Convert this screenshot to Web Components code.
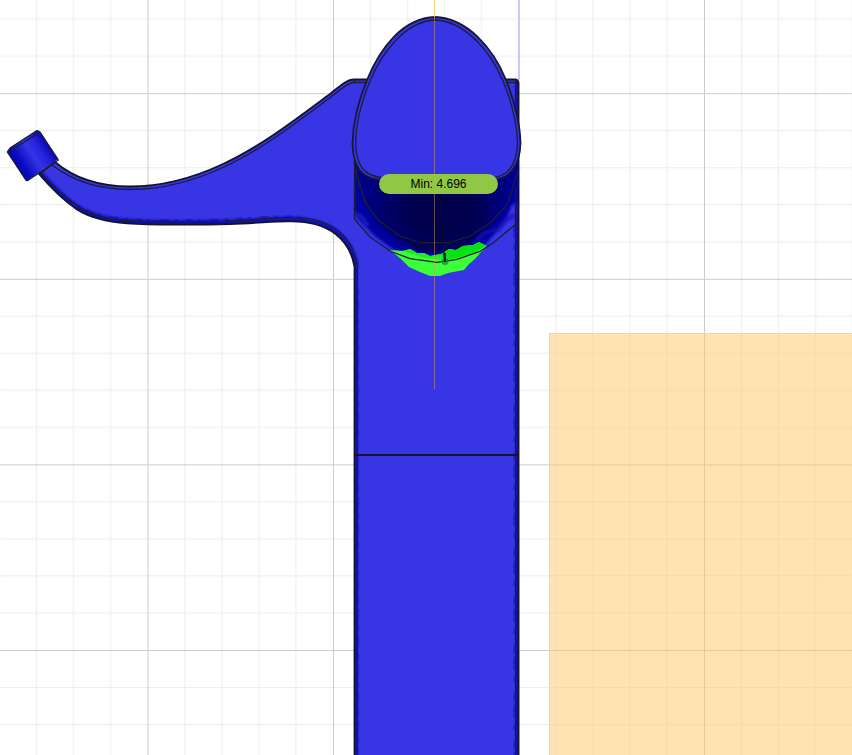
<!DOCTYPE html>
<html lang="en">
<head>
<meta charset="utf-8">
<title>Thickness view</title>
<style>
html, body { height: 100%; margin: 0; }
body { background: #fff; font-family: "Liberation Sans", Arial, sans-serif; overflow: hidden; }
</style>
</head>
<body>
<model-viewport>
  <view-grid></view-grid>
  <part-model></part-model>
  <measure-label>Min: 4.696</measure-label>
</model-viewport>
<script>
function define(name, html) {
  const t = document.createElement('template');
  t.innerHTML = html;
  customElements.define(name, class extends HTMLElement {
    constructor() {
      super();
      this.attachShadow({ mode: 'open' }).append(t.content.cloneNode(true));
    }
  });
}

define('model-viewport', `
<style>
:host { display: grid; position: relative; height: 100%; overflow: hidden; background: #fff; }
::slotted(view-grid), ::slotted(part-model) { grid-area: 1 / 1; }
::slotted(measure-label) { position: absolute; left: 379px; top: 174px; }
</style><slot></slot>`);

define('measure-label', `
<style>
:host { display: flex; align-items: center; justify-content: center; box-sizing: border-box; width: 119px; height: 20px; border-radius: 10px; background: #90c846; color: #000; font-size: 12px; line-height: 20px; white-space: nowrap; }
</style><span><slot></slot></span>`);

define('view-grid', `
<style>
:host { display: block; min-width: 0; min-height: 0; }
svg { display: block; width: 100%; height: 100%; }
</style>
<svg aria-hidden="true">
  <defs>
    <pattern id="cells" x="147.500" y="93.200" width="185.5" height="185.6" patternUnits="userSpaceOnUse">
      <g fill="none" stroke="#000" stroke-opacity=".07">
        <path d="M37.5 0V186M74.5 0V186M111.5 0V186M148.5 0V186M0 37.500H186M0 74.500H186M0 111.500H186M0 148.800H186"/>
        <path d="M.5 0V186M0 .5H186" stroke-opacity=".2"/>
      </g>
    </pattern>
  </defs>
  <rect width="100%" height="100%" fill="url(#cells)"/>
  <rect x="549" y="333" width="100%" height="100%" fill="#ffc766" fill-opacity=".5"/>
  <path d="M549.5 5000V333.500H5000" fill="none" stroke="#f9d492"/>
  <path d="M519 0V80" stroke="#c9c7ff" stroke-width="2"/>
</svg>`);

define('part-model', `
<style>
:host { display: block; min-width: 0; min-height: 0; }
svg { display: block; width: 100%; height: 100%; overflow: hidden; }
.edge { fill: none; stroke: #1c1c38; stroke-width: 1.3; stroke-linejoin: round; }
.rim { stroke: #14142c; stroke-width: 1.8; }
</style>
<svg role="img" aria-label="Part thickness analysis">
  <defs>
    <filter id="soft" x="-20%" y="-20%" width="140%" height="140%"><feGaussianBlur stdDeviation="1.500"/></filter>
    <filter id="wide" x="-30%" y="-30%" width="160%" height="160%"><feGaussianBlur stdDeviation="8"/></filter>
    <linearGradient id="cap" x1="14" y1="166" x2="50" y2="142" gradientUnits="userSpaceOnUse">
      <stop offset="0" stop-color="#0000ac"/><stop offset=".2" stop-color="#0b0bc3"/><stop offset=".5" stop-color="#3534e4"/><stop offset=".72" stop-color="#2422dc"/><stop offset="1" stop-color="#0000a0"/>
    </linearGradient>
    <linearGradient id="well" x1="355" y1="0" x2="518" y2="0" gradientUnits="userSpaceOnUse">
      <stop offset="0" stop-color="#000090"/><stop offset=".2" stop-color="#000069"/><stop offset=".5" stop-color="#000050"/><stop offset=".75" stop-color="#00005c"/><stop offset="1" stop-color="#000098"/>
    </linearGradient>
    <clipPath id="arch"><path d="M354 160V219L370 237L390 251L410 258.700L437 262.300L457 259.300L480 251.300L493 243L516 224H519V160Z"/></clipPath>
    <clipPath id="body"><path id="outline" d="M354 79.500C347 79.500 340 86 330 94C295 120 260 147 223 164C191 179 160 186.500 130 186.500C102 186.500 75 179 55 162L39 174C51 188 63 200 77 209.500C92 219 108 222 127 223.300C150 225 200 225 230 224C260 223 275 221 290 221.300C330 221 350 240 354.500 267V5000H518.500V83Q518 79.500 515 79.500Z"/></clipPath>
  </defs>
  <use href="#outline" fill="#3835e5"/>
  <g clip-path="url(#body)">
    <path d="M39 174C51 188 63 200 77 209.500C92 219 108 222 127 223.300C150 225 200 225 230 224C260 223 275 221 290 221.300C330 221 350 240 354.500 267" fill="none" stroke="#0d0bb0" stroke-width="8" filter="url(#soft)"/>
    <path d="M77 205.500C92 215 108 218 127 219.300C150 221 200 221 230 219.500C260 218 275 216.500 300 217" fill="none" stroke="#1410b4" stroke-width="3" stroke-opacity=".6" stroke-dasharray="4 7 7 5 3 9 9 6"/>
    <path d="M356 267V5000M517 80V5000" stroke="#1511cc" stroke-width="3"/>
    <path d="M514 225V5000" fill="none" stroke="#1914b5" stroke-width="2" stroke-opacity=".5" stroke-dasharray="13 7 5 11 8 4"/>
    <path d="M359 290V5000" fill="none" stroke="#1914b5" stroke-opacity=".35" stroke-width="1" stroke-dasharray="5 6 9 8"/>
  </g>
  <use href="#outline" class="edge rim"/>
  <path class="edge" d="M367 82.500H354C348 83 341 89 331 97C296 123 261 150 224 167C192 182 160 189.500 130 189.500C102 189.500 74 182 52 165"/>
  <path class="edge" d="M41 173C53 186 64 197 78 206C93 216 108 219 127 220.500C150 222 200 222 230 220.800C260 219.500 275 217.500 290 217.700C334 217 354 239 357.500 267V5000M354 267H358M515.500 83V5000M505 82.500H518M354.500 79.500V83"/>
  <path class="edge rim" d="M355 455H518"/>
  <g clip-path="url(#arch)">
    <path d="M354 155V214L364 225L376 237L390 247L408 260H465L484 246L496 232L507 217L512 205L518 202V155Z" fill="#00009c" filter="url(#soft)"/>
    <path d="M356 160L362 196L378 224L400 241L420 252H456L476 240L496 220L510 195L518 160Z" fill="url(#well)" filter="url(#soft)"/>
    <ellipse cx="441" cy="210" rx="46" ry="24" fill="#000044" fill-opacity=".6" filter="url(#wide)"/>
    <path d="M474 243L484 233L499 229L506 220L515 215" fill="none" stroke="#1210b8" stroke-width="3" filter="url(#soft)"/>
    <path d="M355 213L362 217L368 226" fill="none" stroke="#2320d0" stroke-width="3" filter="url(#soft)"/>
  </g>
  <path fill="#3cff3a" d="M390 250L404 251L410 249L417 253L424 253L430 256L441 254L449 249L456 250L463 246L473 245L479 242L487 246L481 252L475 259L469 264L464 270L448 273L440 276H430L420 272L409 267L401 259Z"/>
  <path fill="#06e312" d="M441 254L449 249L456 250L463 246L473 245L479 242L486 246L475 252L457 258L444 260Z"/>
  <path fill="#20ee22" d="M402 251L410 249L417 253L424 253L430 256L441 254L444 260L425 258Z"/>
  <path class="edge" d="M354.500 160V219L370 237L390 251L410 258.700L437 262.300L457 259.300L480 251.300L493 243L516 224H518.500M355 167L365 202L378 220L400 236L420 242.700H450L470 236L490 223L507 205L518 171M356 171L360 187L367 205M515.500 188V224"/>
  <path class="edge" d="M440 193L444.500 262" style="stroke:#0a0a24"/>
  <circle cx="445" cy="261.500" r="3.500" fill="#178c2b" fill-opacity=".75"/>
  <path class="edge rim" d="M445 253V262"/>
  <path d="M435 17C403 18 380 48 367 80C360 97 353 121 352.500 143C353 167 361 180 385 180H490C513 180 520 161 520.500 143C520 121 513 98 506 80C493 48 467 18 435 17Z" fill="#3835e5" stroke="#181834" stroke-width="1.800"/>
  <path class="edge" d="M435 20C407 21 383 50 370 81C363 98 356 121 355.700 143C356 164 363 177 385 178H490C511 177 517 160 517.500 143C517 121 510 98 503 81C490 50 464 21 435 20Z"/>
  <path d="M7.300 151.700L10 148L36 131L39.500 131L58.300 159L26.500 181.300Z" fill="url(#cap)"/>
  <path class="edge" d="M26.500 181L7.300 152L10 148L37 130.500L40 132L58.300 160L27 181M8 152.500L39 132.500"/>
  <path d="M434.500 0V17" stroke="#ffcf79"/>
  <path d="M434.500 17V389" stroke="#d89a58" stroke-opacity=".5"/>
</svg>`);
</script>
</body>
</html>
